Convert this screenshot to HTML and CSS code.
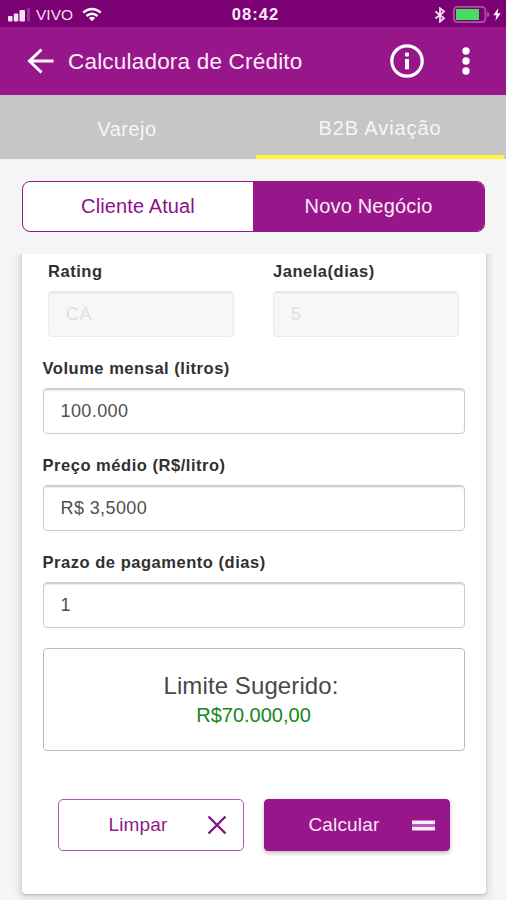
FILE: index.html
```html
<!DOCTYPE html>
<html lang="pt-BR">
<head>
<meta charset="utf-8">
<title>Calculadora de Crédito</title>
<link rel="stylesheet" href="styles.css">
</head>
<body>
<div class="status">
  <div class="status-left">
    <svg class="signal" width="22" height="14" viewBox="0 0 22 14"><g fill="#f8dff5"><rect x="0" y="8" width="4.500" height="5.500" rx="1"/><rect x="5.800" y="5.500" width="4.500" height="8" rx="1"/><rect x="11.500" y="2" width="5.500" height="11.500" rx="1"/></g><rect x="19" y="0" width="3" height="13.500" rx="1" fill="#96398f"/></svg>
    <span class="carrier">VIVO</span>
    <svg class="wifi" width="20" height="15" viewBox="0 0 20 15"><g fill="none" stroke="#fff" stroke-width="2.500"><path d="M1.200 5.600Q10-1.700 18.800 5.600"/><path d="M4.500 9Q10 4.400 15.500 9"/></g><path d="M6.800 10.900Q10 8.700 13.200 10.900L10 14.300Z" fill="#fff"/></svg>
  </div>
  <div class="clock">08:42</div>
  <div class="status-right">
    <svg width="12" height="16" viewBox="0 0 12 16"><path d="M1.500 4.500L10 11.200L6 14.700V1.300L10 4.600L1.500 11.500" fill="none" stroke="#f3dcf1" stroke-width="1.800"/></svg>
    <svg class="battery" width="37" height="17" viewBox="0 0 37 17"><rect x=".9" y=".9" width="31.500" height="15.200" rx="3.500" fill="none" stroke="#a55aa1" stroke-width="1.700"/><rect x="3" y="3" width="23" height="11" fill="#4cd964"/><path d="M34 6Q36.500 6.500 36.500 8.500T34 11Z" fill="#a55aa1"/></svg>
    <svg class="bolt" width="8" height="13" viewBox="0 0 8 13"><path d="M5.400 0L.3 7.300H3.500L2.300 13L7.700 5.300H4.400Z" fill="#fff"/></svg>
  </div>
</div>
<header class="bar">
  <svg class="back" width="28" height="26" viewBox="0 0 28 26"><path d="M14.500 1.500L2.500 13L14.500 24.500M2.500 13H26.500" fill="none" stroke="#fff" stroke-width="3"/></svg>
  <h1 class="title">Calculadora de Crédito</h1>
  <svg class="info" width="34" height="34" viewBox="0 0 34 34"><circle cx="17" cy="17" r="15.200" fill="none" stroke="#fff" stroke-width="3.200"/><rect x="15" y="8.500" width="4" height="4" rx="1" fill="#fff"/><rect x="15" y="15" width="4" height="10.300" fill="#fff"/></svg>
  <svg class="more" width="8" height="28" viewBox="0 0 8 28"><g fill="#fff"><circle cx="4" cy="4" r="3.700"/><circle cx="4" cy="14" r="3.700"/><circle cx="4" cy="24" r="3.700"/></g></svg>
</header>
<nav class="tabs">
  <div class="tab">Varejo</div>
  <div class="tab tab-active">B2B Aviação</div>
</nav>
<div class="segment">
  <div class="seg">Cliente Atual</div>
  <div class="seg seg-on">Novo Negócio</div>
</div>
<main class="scroller">
  <section class="card">
    <div class="pair">
      <div class="field"><div class="label">Rating</div><div class="input input-off">CA</div></div>
      <div class="field"><div class="label">Janela(dias)</div><div class="input input-off">5</div></div>
    </div>
    <div class="field"><div class="label">Volume mensal (litros)</div><div class="input">100.000</div></div>
    <div class="field"><div class="label">Preço médio (R$/litro)</div><div class="input">R$ 3,5000</div></div>
    <div class="field"><div class="label">Prazo de pagamento (dias)</div><div class="input">1</div></div>
    <div class="result">
      <div class="result-title">Limite Sugerido:</div>
      <div class="result-value">R$70.000,00</div>
    </div>
    <div class="actions">
      <div class="btn"><span class="btn-text">Limpar</span><svg class="cross" width="20" height="20" viewBox="0 0 20 20"><path d="M1.500 1.500L18.500 18.500M18.500 1.500L1.500 18.500" fill="none" stroke="#850f80" stroke-width="2.300"/></svg></div>
      <div class="btn btn-fill"><span class="btn-text">Calcular</span><svg class="equal" width="23" height="11" viewBox="0 0 23 11"><path fill="#b95ab5" d="M0 4h23v3H0z"/><path fill="#fce9fb" d="M0 .5h23v3.500H0zM0 7h23v3.500H0z"/></svg></div>
    </div>
  </section>
</main>
</body>
</html>
```
FILE: styles.css
```css
* { box-sizing: border-box; }
body {
  margin: 0;
  height: 900px;
  overflow: hidden;
  display: flex;
  flex-direction: column;
  background: #f5f5f5;
  font-family: "Liberation Sans", Arial, sans-serif;
  color: #333;
}
.status {
  height: 27px;
  flex: none;
  display: grid;
  grid-template-columns: 1fr auto 1fr;
  align-items: center;
  background: #7b0073;
  color: #fff;
  padding: 2px 5px 0 8px;
}
.status-left, .status-right { display: flex; align-items: center; }
.status-right { justify-content: flex-end; }
.carrier { font-size: 15.5px; margin-left: 6px; color: #f3dcf1; }
.wifi { margin-left: 9px; }
.clock { font-size: 16.5px; font-weight: bold; letter-spacing: 1.1px; margin-left: 2px; color: #fbeefa; }
.battery { margin-left: 7px; }
.bolt { margin-left: 3px; }
.bar {
  height: 68px;
  flex: none;
  display: flex;
  align-items: center;
  background: #97178b;
  padding: 0 36px 0 27px;
}
.title {
  flex: 1;
  margin: 1px 0 0 13px;
  font-size: 22.5px;
  font-weight: normal;
  letter-spacing: .2px;
  color: #fdeafb;
}
.more { margin-left: 38px; }
.tabs { height: 64px; flex: none; display: flex; background: #c6c6c6; padding-right: 2px; }
.tab {
  width: 256px;
  padding: 3px 2px 0 0;
  line-height: 62px;
  text-align: center;
  font-size: 20px;
  letter-spacing: .5px;
  color: #f6f6f6;
}
.tab-active { width: 248px; padding: 2px 0 0; border-bottom: 4px solid #fdf43b; letter-spacing: .9px; }
.segment {
  height: 51px;
  flex: none;
  display: flex;
  margin: 22px 21px 22px 22px;
  border: 1px solid #97178b;
  border-radius: 8px;
  overflow: hidden;
  background: #fff;
}
.seg { width: 230px; line-height: 49px; text-align: center; font-size: 20px; letter-spacing: .12px; color: #8d1285; }
.seg-on { flex: 1; background: #97178b; color: #fdeafb; letter-spacing: .2px; }
.scroller { flex: 1; overflow: hidden; }
.card {
  margin: -10px 20px 0 21.5px;
  height: 649.5px;
  padding: 16px 21.5px 0 21px;
  background: #fff;
  border-radius: 4px;
  box-shadow: 0 1px 2px rgba(0,0,0,.18), 0 2px 7px 3px rgba(0,0,0,.1);
}
.pair { display: flex; gap: 39px; padding: 0 5.5px; }
.pair .field { flex: 1; }
.field { height: 97.1px; }
.label {
  height: 31px;
  line-height: 22px;
  font-size: 16.5px;
  font-weight: bold;
  letter-spacing: .53px;
  color: #303030;
}
.input {
  height: 46px;
  border: 1px solid #ccc;
  border-radius: 4px;
  box-shadow: inset 0 2px 2px -1px #c4c4c4;
  padding-left: 17px;
  line-height: 44px;
  font-size: 18px;
  letter-spacing: .4px;
  color: #505050;
}
.input-off { background: #f7f7f7; border-color: #ebebeb; box-shadow: inset 0 2px 2px -1px #dedede; color: #e0e0e0; }
.result {
  height: 103px;
  border: 1px solid #bcbcbc;
  border-radius: 4px;
  padding-top: 22px;
  text-align: center;
}
.result-title { font-size: 24px; line-height: 30px; letter-spacing: .1px; color: #484848; margin-right: 5px; }
.result-value { font-size: 20px; line-height: 29px; color: #158720; }
.actions { display: flex; gap: 20px; margin-top: 48px; padding: 0 15px; }
.btn {
  width: 186px;
  height: 52px;
  display: flex;
  align-items: center;
  border: 1px solid #ad5ca8;
  border-radius: 5px;
  padding: 0 16px 0 50px;
  color: #8e1a87;
}
.btn-text { flex: 1; font-size: 19px; letter-spacing: .15px; }
.btn-fill {
  border-color: #97178b;
  border-radius: 4px;
  background: #97178b;
  color: #fde3fa;
  padding: 0 14px 0 44px;
  box-shadow: 0 2px 4px rgba(0,0,0,.28);
}
```
